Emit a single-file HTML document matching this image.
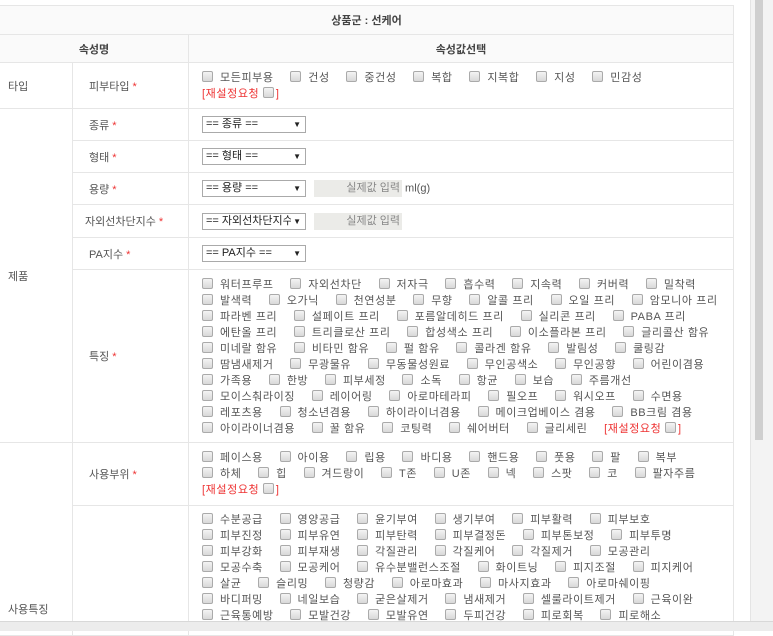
<!DOCTYPE html>
<html><head><meta charset="utf-8"><style>
body{margin:0;width:773px;height:630px;overflow:hidden;background:#fff;font-family:"Liberation Sans","Noto Sans CJK KR",sans-serif;font-size:11px;color:#555;position:relative}
table{position:absolute;left:-1px;top:5px;border-collapse:collapse;table-layout:fixed;width:735px}
td,th{border:1px solid #e6e6e6;padding:0;vertical-align:middle}
th{background:#fafafa;font-weight:bold;color:#444;font-size:11px}
.c1{padding-left:8px}
.c2{padding-left:16px}
.c3{padding-left:13px}
.r{color:#e33}
.cb{display:inline-block;width:9px;height:9px;border:1px solid #aaa;border-radius:2px;background:linear-gradient(#f4f4f4,#d8d8d8);vertical-align:-1px;margin-right:7px}
.ln{height:16px;line-height:16px;white-space:nowrap;letter-spacing:0.6px}
.ln span.i{margin-right:13px}
.sel{display:inline-block;width:104px;height:17px;border:1px solid #aaa;box-sizing:border-box;line-height:15px;font-size:11px;color:#222;padding-left:3px;position:relative;vertical-align:middle;overflow:hidden;white-space:nowrap}
.sel:after{content:"▼";position:absolute;right:4px;top:0;font-size:8px;background:#fff;padding-left:2px}
.inp{display:inline-block;width:88px;height:17px;background:#ebebe8;color:#888;text-align:right;line-height:17px;vertical-align:middle;margin-left:8px;padding-right:2px;box-sizing:border-box}
</style></head><body>
<table>
<colgroup><col style="width:73px"><col style="width:116px"><col></colgroup>
<tr style="height:29px"><th colspan="3">상품군 : 선케어</th></tr>
<tr style="height:28px"><th colspan="2">속성명</th><th>속성값선택</th></tr>
<tr style="height:46px"><td class="c1">타입</td><td class="c2">피부타입 <span class="r">*</span></td><td class="c3">
<div class="ln"><span class="i"><i class="cb"></i>모든피부용</span> <span class="i"><i class="cb"></i>건성</span> <span class="i"><i class="cb"></i>중건성</span> <span class="i"><i class="cb"></i>복합</span> <span class="i"><i class="cb"></i>지복합</span> <span class="i"><i class="cb"></i>지성</span> <span class="i"><i class="cb"></i>민감성</span></div>
<div class="ln r">[재설정요청 <i class="cb" style="margin-right:2px"></i>]</div></td></tr>
<tr style="height:32px"><td rowspan="6" class="c1">제품</td><td class="c2">종류 <span class="r">*</span></td><td class="c3"><span class="sel">== 종류 ==</span></td></tr>
<tr style="height:32px"><td class="c2">형태 <span class="r">*</span></td><td class="c3"><span class="sel">== 형태 ==</span></td></tr>
<tr style="height:32px"><td class="c2">용량 <span class="r">*</span></td><td class="c3"><span class="sel">== 용량 ==</span><span class="inp">실제값 입력</span> ml(g)</td></tr>
<tr style="height:33px"><td class="c2" style="padding-left:12px">자외선차단지수 <span class="r">*</span></td><td class="c3"><span class="sel">== 자외선차단지수</span><span class="inp">실제값 입력</span></td></tr>
<tr style="height:32px"><td class="c2">PA지수 <span class="r">*</span></td><td class="c3"><span class="sel">== PA지수 ==</span></td></tr>
<tr style="height:173px"><td class="c2">특징 <span class="r">*</span></td><td class="c3" style="padding-top:2px">
<div class="ln"><span class="i"><i class="cb"></i>워터프루프</span> <span class="i"><i class="cb"></i>자외선차단</span> <span class="i"><i class="cb"></i>저자극</span> <span class="i"><i class="cb"></i>흡수력</span> <span class="i"><i class="cb"></i>지속력</span> <span class="i"><i class="cb"></i>커버력</span> <span class="i"><i class="cb"></i>밀착력</span></div>
<div class="ln"><span class="i"><i class="cb"></i>발색력</span> <span class="i"><i class="cb"></i>오가닉</span> <span class="i"><i class="cb"></i>천연성분</span> <span class="i"><i class="cb"></i>무향</span> <span class="i"><i class="cb"></i>알콜 프리</span> <span class="i"><i class="cb"></i>오일 프리</span> <span class="i"><i class="cb"></i>암모니아 프리</span></div>
<div class="ln"><span class="i"><i class="cb"></i>파라벤 프리</span> <span class="i"><i class="cb"></i>설페이트 프리</span> <span class="i"><i class="cb"></i>포름알데히드 프리</span> <span class="i"><i class="cb"></i>실리콘 프리</span> <span class="i"><i class="cb"></i>PABA 프리</span></div>
<div class="ln"><span class="i"><i class="cb"></i>에탄올 프리</span> <span class="i"><i class="cb"></i>트리클로산 프리</span> <span class="i"><i class="cb"></i>합성색소 프리</span> <span class="i"><i class="cb"></i>이소플라본 프리</span> <span class="i"><i class="cb"></i>글리콜산 함유</span></div>
<div class="ln"><span class="i"><i class="cb"></i>미네랄 함유</span> <span class="i"><i class="cb"></i>비타민 함유</span> <span class="i"><i class="cb"></i>펄 함유</span> <span class="i"><i class="cb"></i>콜라겐 함유</span> <span class="i"><i class="cb"></i>발림성</span> <span class="i"><i class="cb"></i>쿨링감</span></div>
<div class="ln"><span class="i"><i class="cb"></i>땀냄새제거</span> <span class="i"><i class="cb"></i>무광물유</span> <span class="i"><i class="cb"></i>무동물성원료</span> <span class="i"><i class="cb"></i>무인공색소</span> <span class="i"><i class="cb"></i>무인공향</span> <span class="i"><i class="cb"></i>어린이겸용</span></div>
<div class="ln"><span class="i"><i class="cb"></i>가족용</span> <span class="i"><i class="cb"></i>한방</span> <span class="i"><i class="cb"></i>피부세정</span> <span class="i"><i class="cb"></i>소독</span> <span class="i"><i class="cb"></i>항균</span> <span class="i"><i class="cb"></i>보습</span> <span class="i"><i class="cb"></i>주름개선</span></div>
<div class="ln"><span class="i"><i class="cb"></i>모이스춰라이징</span> <span class="i"><i class="cb"></i>레이어링</span> <span class="i"><i class="cb"></i>아로마테라피</span> <span class="i"><i class="cb"></i>필오프</span> <span class="i"><i class="cb"></i>워시오프</span> <span class="i"><i class="cb"></i>수면용</span></div>
<div class="ln"><span class="i"><i class="cb"></i>레포츠용</span> <span class="i"><i class="cb"></i>청소년겸용</span> <span class="i"><i class="cb"></i>하이라이너겸용</span> <span class="i"><i class="cb"></i>메이크업베이스 겸용</span> <span class="i"><i class="cb"></i>BB크림 겸용</span></div>
<div class="ln"><span class="i"><i class="cb"></i>아이라이너겸용</span> <span class="i"><i class="cb"></i>꿀 함유</span> <span class="i"><i class="cb"></i>코팅력</span> <span class="i"><i class="cb"></i>쉐어버터</span> <span class="i"><i class="cb"></i>글리세린</span> <span class="r">[재설정요청 <i class="cb" style="margin-right:2px"></i>]</span></div>
</td></tr>
<tr style="height:63px"><td rowspan="2" class="c1" style="vertical-align:top;padding-top:158px">사용특징</td><td class="c2">사용부위 <span class="r">*</span></td><td class="c3">
<div class="ln"><span class="i"><i class="cb"></i>페이스용</span> <span class="i"><i class="cb"></i>아이용</span> <span class="i"><i class="cb"></i>립용</span> <span class="i"><i class="cb"></i>바디용</span> <span class="i"><i class="cb"></i>핸드용</span> <span class="i"><i class="cb"></i>풋용</span> <span class="i"><i class="cb"></i>팔</span> <span class="i"><i class="cb"></i>복부</span></div>
<div class="ln"><span class="i"><i class="cb"></i>하체</span> <span class="i"><i class="cb"></i>힙</span> <span class="i"><i class="cb"></i>겨드랑이</span> <span class="i"><i class="cb"></i>T존</span> <span class="i"><i class="cb"></i>U존</span> <span class="i"><i class="cb"></i>넥</span> <span class="i"><i class="cb"></i>스팟</span> <span class="i"><i class="cb"></i>코</span> <span class="i"><i class="cb"></i>팔자주름</span></div>
<div class="ln r">[재설정요청 <i class="cb" style="margin-right:2px"></i>]</div></td></tr>
<tr style="height:130px"><td class="c2"></td><td class="c3" style="vertical-align:top;padding-top:6px">
<div class="ln"><span class="i"><i class="cb"></i>수분공급</span> <span class="i"><i class="cb"></i>영양공급</span> <span class="i"><i class="cb"></i>윤기부여</span> <span class="i"><i class="cb"></i>생기부여</span> <span class="i"><i class="cb"></i>피부활력</span> <span class="i"><i class="cb"></i>피부보호</span></div>
<div class="ln"><span class="i"><i class="cb"></i>피부진정</span> <span class="i"><i class="cb"></i>피부유연</span> <span class="i"><i class="cb"></i>피부탄력</span> <span class="i"><i class="cb"></i>피부결정돈</span> <span class="i"><i class="cb"></i>피부톤보정</span> <span class="i"><i class="cb"></i>피부투명</span></div>
<div class="ln"><span class="i"><i class="cb"></i>피부강화</span> <span class="i"><i class="cb"></i>피부재생</span> <span class="i"><i class="cb"></i>각질관리</span> <span class="i"><i class="cb"></i>각질케어</span> <span class="i"><i class="cb"></i>각질제거</span> <span class="i"><i class="cb"></i>모공관리</span></div>
<div class="ln"><span class="i"><i class="cb"></i>모공수축</span> <span class="i"><i class="cb"></i>모공케어</span> <span class="i"><i class="cb"></i>유수분밸런스조절</span> <span class="i"><i class="cb"></i>화이트닝</span> <span class="i"><i class="cb"></i>피지조절</span> <span class="i"><i class="cb"></i>피지케어</span></div>
<div class="ln"><span class="i"><i class="cb"></i>살균</span> <span class="i"><i class="cb"></i>슬리밍</span> <span class="i"><i class="cb"></i>청량감</span> <span class="i"><i class="cb"></i>아로마효과</span> <span class="i"><i class="cb"></i>마사지효과</span> <span class="i"><i class="cb"></i>아로마쉐이핑</span></div>
<div class="ln"><span class="i"><i class="cb"></i>바디퍼밍</span> <span class="i"><i class="cb"></i>네일보습</span> <span class="i"><i class="cb"></i>굳은살제거</span> <span class="i"><i class="cb"></i>냄새제거</span> <span class="i"><i class="cb"></i>셀룰라이트제거</span> <span class="i"><i class="cb"></i>근육이완</span></div>
<div class="ln"><span class="i"><i class="cb"></i>근육통예방</span> <span class="i"><i class="cb"></i>모발건강</span> <span class="i"><i class="cb"></i>모발유연</span> <span class="i"><i class="cb"></i>두피건강</span> <span class="i"><i class="cb"></i>피로회복</span> <span class="i"><i class="cb"></i>피로해소</span></div>
</td></tr>
</table>
<div style="position:absolute;left:750px;top:0;width:23px;height:630px;background:#f3f3f3;border-left:1px solid #e4e4e4"></div>
<div style="position:absolute;left:755px;top:0;width:8px;height:440px;background:#cfcfcf"></div>
<div style="position:absolute;left:0;top:621px;width:773px;height:9px;background:#ececec;border-top:1px solid #d8d8d8"></div>
</body></html>
